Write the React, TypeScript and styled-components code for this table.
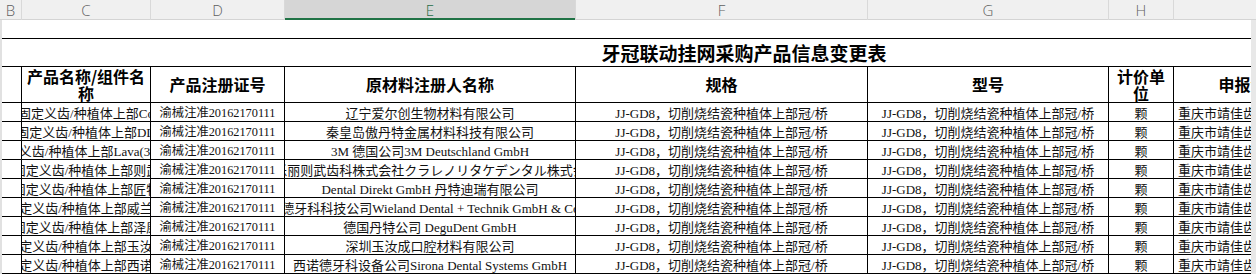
import styled, { createGlobalStyle } from "styled-components";

// column widths: B, C, D, E, F, G, H, I, J (J only carries the merged title)
const COLS = [22, 129, 134, 291, 292, 241, 65, 186, 106];
const template = (first: number) =>
  [first, ...COLS.slice(1)].map((w) => `${w}px`).join(" ");

const LETTERS = ["B", "C", "D", "E", "F", "G", "H", "I", "J"];

const CELL_FONT = `"Liberation Serif", "Noto Sans CJK SC", serif`;
const HEAD_FONT = `"Noto Sans CJK SC", "Liberation Sans", sans-serif`;

const SPEC = "JJ-GD8，切削烧结瓷种植体上部冠/桥";

const rows = [
  { name: "固定义齿/种植体上部Co", owner: "辽宁爱尔创生物材料有限公司" },
  { name: "固定义齿/种植体上部DD", owner: "秦皇岛傲丹特金属材料科技有限公司" },
  { name: "固定义齿/种植体上部Lava(3M)冠", owner: "3M 德国公司3M Deutschland GmbH" },
  { name: "固定义齿/种植体上部则武", owner: "可乐丽则武齿科株式会社クラレノリタケデンタル株式会社" },
  { name: "固定义齿/种植体上部匠特", owner: "Dental Direkt GmbH 丹特迪瑞有限公司" },
  { name: "固定义齿/种植体上部威兰德", owner: "威兰德牙科科技公司Wieland Dental + Technik GmbH & Co. KG" },
  { name: "固定义齿/种植体上部泽康", owner: "德国丹特公司 DeguDent GmbH" },
  { name: "固定义齿/种植体上部玉汝成", owner: "深圳玉汝成口腔材料有限公司" },
  { name: "固定义齿/种植体上部西诺德", owner: "西诺德牙科设备公司Sirona Dental Systems GmbH" },
];

const GlobalStyle = createGlobalStyle`
  html, body {
    margin: 0;
    padding: 0;
    background: #ffffff;
    overflow: hidden;
  }
`;

const Sheet = styled.div`
  width: 1256px;
  height: 274px;
  display: flex;
  flex-direction: column;
  overflow: hidden;
  background: #fff;
`;

const ColumnBar = styled.div`
  display: grid;
  grid-template-columns: ${template(22)};
  height: 20px;
  flex-shrink: 0;
  box-sizing: border-box;
  background: #f0f0f0;
  border-bottom: 1px solid #d4d4d4;
`;

const ColHead = styled.div<{ $selected?: boolean }>`
  display: flex;
  align-items: center;
  justify-content: center;
  box-sizing: border-box;
  border-right: 1px solid #d9d9d9;
  font-family: "Open Sans", "Noto Sans", sans-serif;
  font-size: 15px;
  font-weight: 300;
  color: ${(p) => (p.$selected ? "#1f6b45" : "#5f5f5f")};
  background: ${(p) => (p.$selected ? "#d6d6d6" : "transparent")};
  box-shadow: ${(p) => (p.$selected ? "inset 0 -2px 0 #217346" : "none")};
`;

const Body = styled.div`
  flex: 1;
  display: flex;
  min-height: 0;
`;

const LeftEdge = styled.div`
  width: 2px;
  flex-shrink: 0;
  background: #e1e1e1;
`;

const RightEdge = styled.div`
  width: 5px;
  flex-shrink: 0;
  background: #e8e8e8;
`;

const Viewport = styled.div`
  flex: 1;
  overflow: hidden;
`;

const Table = styled.div`
  width: max-content;
`;

const Row = styled.div<{ $h: number }>`
  display: grid;
  grid-template-columns: ${template(20)};
  height: ${(p) => p.$h}px;
  box-sizing: border-box;
  border-bottom: 1px solid #000;
`;

const BlankRow = styled.div`
  height: 19px;
  box-sizing: border-box;
  border-bottom: 1px solid #000;
`;

const TitleCell = styled.div`
  grid-column: 2 / -1;
  display: flex;
  align-items: center;
  justify-content: center;
  font-family: ${HEAD_FONT};
  font-weight: 700;
  font-size: 19px;
  color: #000;
`;

const HeadCell = styled.div<{ $pad?: number; $wrap?: boolean }>`
  box-sizing: border-box;
  border-right: 1px solid #000;
  overflow: hidden;
  display: flex;
  align-items: center;
  justify-content: center;
  text-align: center;
  padding: 0 ${(p) => p.$pad ?? 0}px;
  font-family: ${HEAD_FONT};
  font-weight: 700;
  font-size: 16px;
  line-height: 17px;
  color: #000;
  white-space: ${(p) => (p.$wrap ? "normal" : "nowrap")};

  & > span {
    flex-shrink: 0;
  }
`;

const Cell = styled.div<{ $align?: "left" | "center"; $size?: number }>`
  box-sizing: border-box;
  border-right: 1px solid #000;
  overflow: hidden;
  display: flex;
  align-items: center;
  justify-content: ${(p) => (p.$align === "left" ? "flex-start" : "center")};
  padding-left: ${(p) => (p.$align === "left" ? 4 : 0)}px;
  white-space: nowrap;
  font-family: ${CELL_FONT};
  font-size: ${(p) => p.$size ?? 13}px;
  color: #111;

  & > span {
    flex-shrink: 0;
  }
`;

const Empty = styled.div`
  box-sizing: border-box;
  border-right: 1px solid #000;
`;

export default function App() {
  return (
    <>
      <GlobalStyle />
      <Sheet>
        <ColumnBar>
          {LETTERS.map((l) => (
            <ColHead key={l} $selected={l === "E"}>
              {l}
            </ColHead>
          ))}
        </ColumnBar>

        <Body>
          <LeftEdge />
          <Viewport>
            <Table>
              <BlankRow />

              <Row $h={28}>
                <div />
                <TitleCell>牙冠联动挂网采购产品信息变更表</TitleCell>
              </Row>

              <Row $h={36}>
                <Empty />
                <HeadCell $wrap $pad={2}>
                  产品名称/组件名称
                </HeadCell>
                <HeadCell>产品注册证号</HeadCell>
                <HeadCell>原材料注册人名称</HeadCell>
                <HeadCell>规格</HeadCell>
                <HeadCell>型号</HeadCell>
                <HeadCell $wrap $pad={4}>
                  计价单位
                </HeadCell>
                <HeadCell>
                  <span>申报企业名称</span>
                </HeadCell>
                <Empty />
              </Row>

              {rows.map((r, i) => (
                <Row key={i} $h={19}>
                  <Empty />
                  <Cell>
                    <span>{r.name}</span>
                  </Cell>
                  <Cell $size={12.3}>
                    <span>渝械注准20162170111</span>
                  </Cell>
                  <Cell>
                    <span>{r.owner}</span>
                  </Cell>
                  <Cell>
                    <span>{SPEC}</span>
                  </Cell>
                  <Cell>
                    <span>{SPEC}</span>
                  </Cell>
                  <Cell>
                    <span>颗</span>
                  </Cell>
                  <Cell $align="left">
                    <span>重庆市靖佳齿科技术有限公司</span>
                  </Cell>
                  <Empty />
                </Row>
              ))}
            </Table>
          </Viewport>
          <RightEdge />
        </Body>
      </Sheet>
    </>
  );
}
